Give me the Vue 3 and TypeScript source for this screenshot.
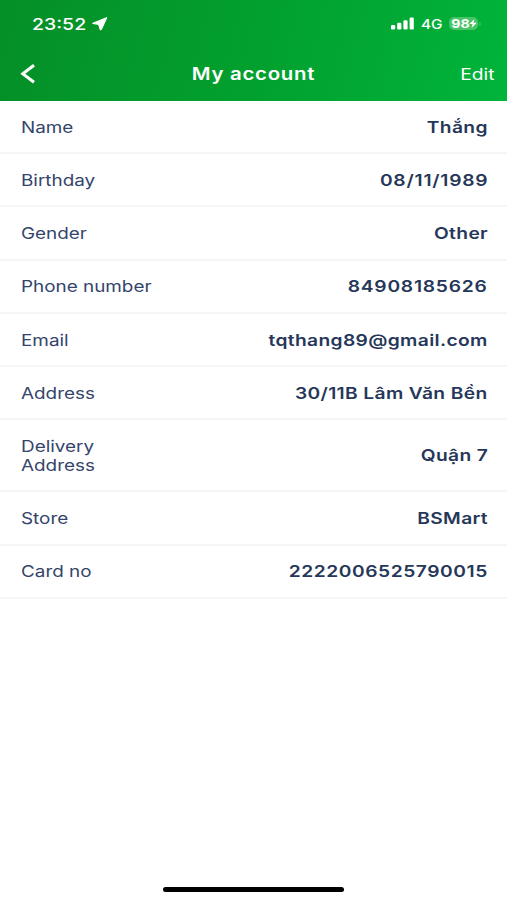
<script setup lang="ts">
interface Field {
  label: string
  value: string
  tall?: boolean
  tracking?: number
}

const fields: Field[] = [
  { label: 'Name', value: 'Thắng' },
  { label: 'Birthday', value: '08/11/1989', tracking: 0.65 },
  { label: 'Gender', value: 'Other' },
  { label: 'Phone number', value: '84908185626', tracking: 0.65 },
  { label: 'Email', value: 'tqthang89@gmail.com' },
  { label: 'Address', value: '30/11B Lâm Văn Bền' },
  { label: 'Delivery\nAddress', value: 'Quận 7', tall: true },
  { label: 'Store', value: 'BSMart' },
  { label: 'Card no', value: '2222006525790015', tracking: 0.45 },
]
</script>

<template>
  <div class="screen">
    <header class="header">
      <div class="status">
        <span class="time">23:52</span>
        <svg class="location" viewBox="0 0 16 14" width="16" height="14">
          <path d="M14.6 0.8 L1 6.4 L6.8 7.2 L8.4 12.6 L9.3 12.2Z" fill="#fff" stroke="#fff" stroke-width="1.4" stroke-linejoin="round" />
        </svg>
        <div class="indicators">
          <svg viewBox="0 0 23 13" width="23" height="13">
            <g fill="#fff">
              <rect x="0" y="8" width="4.2" height="4.4" rx="1.2" />
              <rect x="6.2" y="5.8" width="4.2" height="6.6" rx="1.2" />
              <rect x="12.4" y="3.2" width="4.2" height="9.2" rx="1.2" />
              <rect x="18.6" y="0.6" width="4.2" height="11.8" rx="1.2" />
            </g>
          </svg>
          <span class="network">4G</span>
          <div class="battery">
            <span class="level">98</span>
            <svg class="bolt" viewBox="0 0 8 9" width="8" height="9">
              <path d="M5.5 0 L0.3 5 H3.6 L2.5 9 L7.8 3.8 H4.5Z" fill="#fff" />
            </svg>
          </div>
          <i class="battery-tip"></i>
        </div>
      </div>
      <nav class="nav">
        <button class="back" aria-label="Back">
          <svg viewBox="0 0 15 20" width="15" height="20">
            <path d="M14 1.2 L2.8 9.7 L14 18.2" fill="none" stroke="#fff" stroke-width="3" />
          </svg>
        </button>
        <h1 class="title">My account</h1>
        <button class="edit"><span class="edit-text">Edit</span></button>
      </nav>
    </header>
    <main class="fields">
      <div v-for="field in fields" :key="field.label" class="row" :class="{ tall: field.tall }">
        <span class="label">{{ field.label }}</span>
        <span class="value" :style="{ letterSpacing: `${field.tracking ?? 0.3}px` }">{{ field.value }}</span>
      </div>
    </main>
    <footer class="footer"><div class="home-bar"></div></footer>
  </div>
</template>

<style>
body {
  background: #fff;
}
</style>

<style scoped>
.screen {
  display: flex;
  flex-direction: column;
  width: 100%;
  height: 900px;
  overflow: hidden;
  background: #fff;
  color: #263759;
  font-family: Inter, "Liberation Sans", sans-serif;
}
.time,
.network,
.level,
.label {
  transform: scaleX(1.18);
  transform-origin: left center;
}
.header {
  flex: none;
  height: 101px;
  background: linear-gradient(105deg, #058f27 0%, #02a02e 50%, #00b43a 100%);
  color: #fff;
}
.status {
  display: flex;
  align-items: center;
  height: 47px;
  padding: 0 26px 0 32px;
}
.time {
  width: 60px;
  font-size: 16.5px;
  font-weight: 550;
  line-height: 20px;
}
.indicators {
  display: flex;
  align-items: center;
  margin-left: auto;
}
.network {
  width: 28px;
  margin-left: 7px;
  font-size: 13px;
  font-weight: 500;
}
.battery {
  display: flex;
  align-items: center;
  width: 29px;
  height: 13px;
  border-radius: 5px;
  background: #46c467;
}
.level {
  width: 17px;
  padding-left: 2px;
  font-size: 12px;
  font-weight: 700;
  line-height: 13px;
}
.bolt {
  flex: none;
  margin-left: 1px;
}
.battery-tip {
  width: 2px;
  height: 4px;
  margin-left: 1px;
  border-radius: 0 2px 2px 0;
  background: #2fbe56;
}
.nav {
  display: grid;
  grid-template-columns: 1fr auto 1fr;
  align-items: center;
  height: 53px;
  padding: 0 12px;
}
.back,
.edit {
  display: flex;
  padding: 0;
  border: 0;
  background: none;
  color: inherit;
  font: inherit;
}
.back {
  padding-left: 8px;
}
.edit {
  justify-self: end;
}
.edit-text {
  font-size: 16px;
  line-height: 20px;
  transform: scaleX(1.2);
  transform-origin: right center;
}
.title {
  margin: 0;
  font-size: 17px;
  font-weight: 600;
  letter-spacing: 0.6px;
  line-height: 20px;
  transform: scaleX(1.2);
}
.row {
  display: flex;
  align-items: center;
  justify-content: space-between;
  box-sizing: border-box;
  height: 53.2px;
  padding: 1.4px 19px 0 20.5px;
  border-bottom: 2px solid #f5f5f6;
}
.row.tall {
  height: 72.2px;
}
.label {
  color: #34446a;
  font-size: 16px;
  line-height: 19px;
  white-space: pre-line;
}
.value {
  font-size: 16px;
  font-weight: 600;
  line-height: 19px;
  transform: scaleX(1.2);
  transform-origin: right center;
}
.footer {
  display: flex;
  justify-content: center;
  margin-top: auto;
  padding-bottom: 8px;
}
.home-bar {
  width: 181px;
  height: 5px;
  border-radius: 3px;
  background: #000;
}
</style>
